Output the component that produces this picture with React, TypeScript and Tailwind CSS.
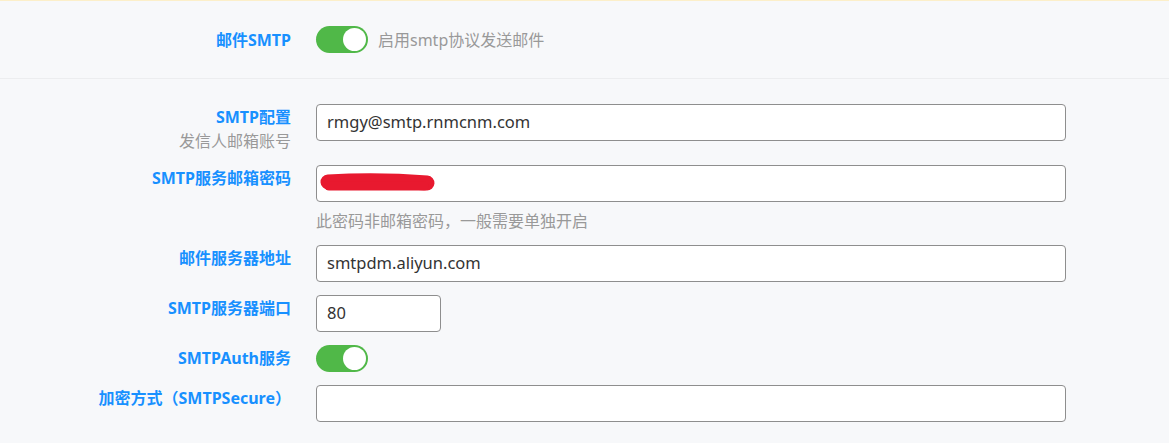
import React from "react";

const font = { fontFamily: '"Noto Sans", "Noto Sans CJK SC", sans-serif' };

function Toggle() {
  return (
    <div className="relative h-[27px] w-[52px] rounded-full bg-[#50b848]">
      <div className="absolute right-[2px] top-[2px] h-[23px] w-[23px] rounded-full bg-white" />
    </div>
  );
}

function Label({ children, sub }: { children: React.ReactNode; sub?: string }) {
  return (
    <div className="pt-[2px] text-right">
      <div className="text-[16px] font-bold leading-[22px] text-[#1890ff]">{children}</div>
      {sub && <div className="mt-[2px] text-[16px] leading-[22px] text-[#999]">{sub}</div>}
    </div>
  );
}

function Input({ value, className = "w-[750px]", children }: { value?: string; className?: string; children?: React.ReactNode }) {
  return (
    <div className={`relative flex h-[37px] items-center rounded-[4px] border border-[#8e8e8e] bg-white px-[10px] text-[16.5px] text-[#333] ${className}`}>
      {value}
      {children}
    </div>
  );
}

export default function App() {
  return (
    <div className="min-h-screen bg-[#f7f8fa]" style={font}>
      <div className="border-t border-[#fcefc9]" />
      <div className="grid grid-cols-[291px_1fr] gap-x-[25px] border-b border-[#ecedef] pb-[25px] pt-[25px]">
        <div className="flex h-[27px] items-center justify-end text-[16px] font-bold text-[#1890ff]">邮件SMTP</div>
        <div className="flex items-center gap-[10px]">
          <Toggle />
          <span className="text-[16px] text-[#999]">启用smtp协议发送邮件</span>
        </div>
      </div>

      <div className="grid grid-cols-[291px_1fr] gap-x-[25px] gap-y-[13px] pt-[25px] pb-[20px]">
        <Label sub="发信人邮箱账号">SMTP配置</Label>
        <div>
          <Input value="rmgy@smtp.rnmcnm.com" />
        </div>

        <Label>SMTP服务邮箱密码</Label>
        <div>
          <Input>
            {/* redacted password scribble */}
            <svg className="absolute left-0 top-0" width="130" height="35" viewBox="0 0 130 35">
              <path d="M11 16 C 45 14, 85 15, 110 17" stroke="#e8192f" strokeWidth="15" strokeLinecap="round" fill="none" />
              <path d="M12 20 C 45 20, 85 20, 107 20" stroke="#e8192f" strokeWidth="9" strokeLinecap="round" fill="none" />
            </svg>
          </Input>
          <div className="mt-[8px] text-[16px] leading-[22px] text-[#999]">此密码非邮箱密码，一般需要单独开启</div>
        </div>

        <Label>邮件服务器地址</Label>
        <div>
          <Input value="smtpdm.aliyun.com" />
        </div>

        <Label>SMTP服务器端口</Label>
        <div>
          <Input value="80" className="w-[125px]" />
        </div>

        <Label>SMTPAuth服务</Label>
        <div>
          <Toggle />
        </div>

        <Label>加密方式（SMTPSecure）</Label>
        <div>
          <Input />
        </div>
      </div>
    </div>
  );
}
